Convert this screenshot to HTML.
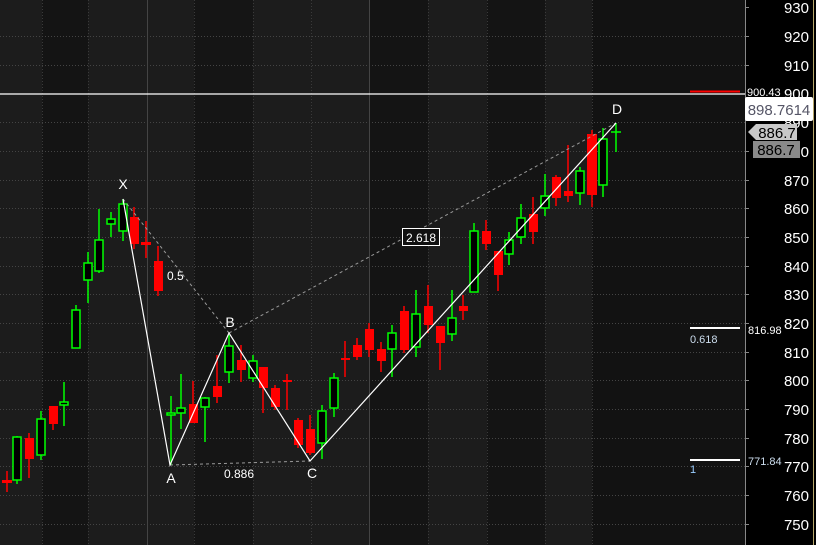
<!DOCTYPE html>
<html><head><meta charset="utf-8"><style>
html,body{margin:0;padding:0;background:#000;}
svg{display:block;}
text{font-family:"Liberation Sans",sans-serif;}
</style></head><body>
<svg width="816" height="545" xmlns="http://www.w3.org/2000/svg">
<rect width="816" height="545" fill="#000"/>
<!-- bands -->
<rect x="0" y="0" width="42" height="545" fill="#1c1c1c"/>
<rect x="42" y="0" width="46" height="545" fill="#141414"/>
<rect x="88" y="0" width="59" height="545" fill="#1c1c1c"/>
<rect x="147" y="0" width="47" height="545" fill="#1c1c1c"/>
<rect x="194" y="0" width="59" height="545" fill="#151515"/>
<rect x="253" y="0" width="58" height="545" fill="#1c1c1c"/>
<rect x="311" y="0" width="59" height="545" fill="#1c1c1c"/>
<rect x="370" y="0" width="58" height="545" fill="#141414"/>
<rect x="428" y="0" width="59" height="545" fill="#1c1c1c"/>
<rect x="487" y="0" width="58" height="545" fill="#141414"/>
<rect x="545" y="0" width="47" height="545" fill="#1c1c1c"/>
<rect x="592" y="0" width="153" height="545" fill="#121212"/>
<!-- vertical grid -->
<g stroke="#3a3a3a" stroke-width="1" stroke-dasharray="1,2">
<line x1="42.5" y1="0" x2="42.5" y2="545"/><line x1="88.5" y1="0" x2="88.5" y2="545"/>
<line x1="194.5" y1="0" x2="194.5" y2="545"/><line x1="253.5" y1="0" x2="253.5" y2="545"/>
<line x1="311.5" y1="0" x2="311.5" y2="545"/><line x1="428.5" y1="0" x2="428.5" y2="545"/>
<line x1="487.5" y1="0" x2="487.5" y2="545"/><line x1="545.5" y1="0" x2="545.5" y2="545"/>
<line x1="592.5" y1="0" x2="592.5" y2="545"/>
</g>
<g stroke="#444" stroke-width="1">
<line x1="147.5" y1="0" x2="147.5" y2="545"/><line x1="369.5" y1="0" x2="369.5" y2="545"/>
</g>
<!-- horizontal grid -->
<g stroke="#444" stroke-width="1" stroke-dasharray="1,2">
<line x1="0" y1="36.5" x2="745" y2="36.5"/><line x1="0" y1="65.5" x2="745" y2="65.5"/>
<line x1="0" y1="122.5" x2="745" y2="122.5"/><line x1="0" y1="151.5" x2="745" y2="151.5"/>
<line x1="0" y1="180.5" x2="745" y2="180.5"/><line x1="0" y1="208.5" x2="745" y2="208.5"/>
<line x1="0" y1="237.5" x2="745" y2="237.5"/><line x1="0" y1="266.5" x2="745" y2="266.5"/>
<line x1="0" y1="294.5" x2="745" y2="294.5"/><line x1="0" y1="323.5" x2="745" y2="323.5"/>
<line x1="0" y1="352.5" x2="745" y2="352.5"/><line x1="0" y1="380.5" x2="745" y2="380.5"/>
<line x1="0" y1="409.5" x2="745" y2="409.5"/><line x1="0" y1="438.5" x2="745" y2="438.5"/>
<line x1="0" y1="466.5" x2="745" y2="466.5"/><line x1="0" y1="495.5" x2="745" y2="495.5"/>
<line x1="0" y1="524.5" x2="745" y2="524.5"/>
</g>
<!-- wicks -->
<g stroke-width="1.5">
<g stroke="#ff0000">
<line x1="7" y1="471" x2="7" y2="492"/>
<line x1="29" y1="433" x2="29" y2="478"/>
<line x1="53" y1="406" x2="53" y2="430"/>
<line x1="134" y1="207" x2="134" y2="249"/>
<line x1="146" y1="221" x2="146" y2="258"/>
<line x1="158" y1="246" x2="158" y2="296"/>
<line x1="193" y1="381" x2="193" y2="423"/>
<line x1="217" y1="355" x2="217" y2="403"/>
<line x1="241" y1="345" x2="241" y2="382"/>
<line x1="263" y1="367" x2="263" y2="413"/>
<line x1="275" y1="385" x2="275" y2="410"/>
<line x1="287" y1="374" x2="287" y2="410"/>
<line x1="298" y1="418" x2="298" y2="448"/>
<line x1="310" y1="415" x2="310" y2="455"/>
<line x1="345" y1="341" x2="345" y2="377"/>
<line x1="357" y1="338" x2="357" y2="360"/>
<line x1="369" y1="323" x2="369" y2="357"/>
<line x1="381" y1="342" x2="381" y2="372"/>
<line x1="404" y1="306" x2="404" y2="353"/>
<line x1="428" y1="285" x2="428" y2="333"/>
<line x1="440" y1="326" x2="440" y2="370"/>
<line x1="463" y1="295" x2="463" y2="320"/>
<line x1="486" y1="220" x2="486" y2="250"/>
<line x1="498" y1="251" x2="498" y2="291"/>
<line x1="533" y1="197" x2="533" y2="244"/>
<line x1="556" y1="175" x2="556" y2="206"/>
<line x1="568" y1="145" x2="568" y2="202"/>
<line x1="592" y1="130" x2="592" y2="207"/>
</g>
<g stroke="#00ff00">
<line x1="17" y1="436" x2="17" y2="484"/>
<line x1="41" y1="411" x2="41" y2="460"/>
<line x1="64" y1="382" x2="64" y2="426"/>
<line x1="76" y1="305" x2="76" y2="348"/>
<line x1="88" y1="252" x2="88" y2="303"/>
<line x1="99" y1="209" x2="99" y2="273"/>
<line x1="111" y1="212" x2="111" y2="237"/>
<line x1="123" y1="199" x2="123" y2="241"/>
<line x1="171" y1="396" x2="171" y2="465"/>
<line x1="181" y1="374" x2="181" y2="429"/>
<line x1="205" y1="397" x2="205" y2="442"/>
<line x1="229" y1="335" x2="229" y2="383"/>
<line x1="253" y1="355" x2="253" y2="382"/>
<line x1="322" y1="405" x2="322" y2="459"/>
<line x1="334" y1="373" x2="334" y2="417"/>
<line x1="392" y1="325" x2="392" y2="377"/>
<line x1="416" y1="290" x2="416" y2="357"/>
<line x1="452" y1="290" x2="452" y2="341"/>
<line x1="474" y1="223" x2="474" y2="292"/>
<line x1="509" y1="232" x2="509" y2="265"/>
<line x1="521" y1="204" x2="521" y2="244"/>
<line x1="545" y1="174" x2="545" y2="216"/>
<line x1="580" y1="167" x2="580" y2="205"/>
<line x1="603" y1="128" x2="603" y2="197"/>
<line x1="616" y1="123" x2="616" y2="152"/>
<line x1="611" y1="132" x2="621" y2="132"/>
</g>
</g>
<!-- red bodies -->
<g fill="#ff0000">
<rect x="2" y="480" width="10" height="3"/>
<rect x="25" y="438" width="9" height="21"/>
<rect x="49" y="406" width="9" height="18"/>
<rect x="130" y="217" width="9" height="27"/>
<rect x="141" y="242" width="10" height="3"/>
<rect x="154" y="261" width="9" height="30"/>
<rect x="189" y="404" width="9" height="19"/>
<rect x="213" y="386" width="9" height="11"/>
<rect x="237" y="360" width="9" height="10"/>
<rect x="259" y="367" width="9" height="21"/>
<rect x="271" y="388" width="9" height="19"/>
<rect x="283" y="380" width="9" height="2"/>
<rect x="294" y="420" width="9" height="25"/>
<rect x="306" y="429" width="9" height="24"/>
<rect x="341" y="358" width="9" height="2"/>
<rect x="353" y="345" width="9" height="12"/>
<rect x="365" y="329" width="9" height="21"/>
<rect x="377" y="349" width="9" height="12"/>
<rect x="400" y="311" width="9" height="39"/>
<rect x="424" y="306" width="9" height="19"/>
<rect x="436" y="326" width="9" height="17"/>
<rect x="459" y="306" width="9" height="5"/>
<rect x="482" y="231" width="9" height="13"/>
<rect x="494" y="251" width="9" height="24"/>
<rect x="529" y="214" width="9" height="18"/>
<rect x="552" y="177" width="9" height="21"/>
<rect x="564" y="191" width="9" height="5"/>
<rect x="587" y="134" width="10" height="61"/>
</g>
<!-- green bodies -->
<g fill="#000" stroke="#00ff00" stroke-width="1.5">
<rect x="13" y="437" width="8" height="43"/>
<rect x="37" y="419" width="8" height="36"/>
<rect x="60" y="402" width="8" height="3"/>
<rect x="72" y="310" width="8" height="38"/>
<rect x="84" y="263" width="8" height="17"/>
<rect x="95" y="240" width="8" height="31"/>
<rect x="107" y="219" width="8" height="5"/>
<rect x="119" y="204" width="8" height="27"/>
<rect x="167" y="413" width="8" height="2"/>
<rect x="177" y="408" width="8" height="5"/>
<rect x="201" y="398" width="8" height="9"/>
<rect x="225" y="346" width="8" height="26"/>
<rect x="249" y="361" width="8" height="17"/>
<rect x="318" y="411" width="8" height="32"/>
<rect x="330" y="378" width="8" height="30"/>
<rect x="388" y="333" width="8" height="16"/>
<rect x="412" y="314" width="8" height="33"/>
<rect x="448" y="318" width="8" height="16"/>
<rect x="470" y="231" width="8" height="61"/>
<rect x="505" y="240" width="8" height="14"/>
<rect x="517" y="218" width="8" height="19"/>
<rect x="541" y="196" width="8" height="12"/>
<rect x="576" y="171" width="8" height="22"/>
<rect x="599" y="139" width="8" height="46"/>
</g>
<!-- pattern -->
<g fill="none" stroke="#9a9a9a" stroke-width="1" stroke-dasharray="3,3">
<line x1="123" y1="199" x2="229" y2="333"/>
<line x1="170" y1="465" x2="310" y2="461"/>
<line x1="229" y1="333" x2="616" y2="123"/>
</g>
<polyline points="123,199 170,465 229,333 310,461 616,123" fill="none" stroke="#fff" stroke-width="1.2"/>
<g fill="#fff" font-size="14" text-anchor="middle">
<text x="123" y="189">X</text>
<text x="171" y="483">A</text>
<text x="230" y="327">B</text>
<text x="312" y="478">C</text>
<text x="617" y="114">D</text>
</g>
<g fill="#fff" font-size="12">
<text x="167" y="280">0.5</text>
<text x="224" y="478">0.886</text>
</g>
<rect x="402.5" y="228.5" width="37" height="17" fill="#111" stroke="#fff" stroke-width="1"/>
<text x="421" y="242" fill="#fff" font-size="12" text-anchor="middle">2.618</text>
<!-- horizontal lines -->
<line x1="0" y1="94" x2="745" y2="94" stroke="#fff" stroke-width="1.3"/>
<line x1="690" y1="91.5" x2="740" y2="91.5" stroke="#ff0000" stroke-width="2"/>
<line x1="690" y1="328" x2="740" y2="328" stroke="#fff" stroke-width="2"/>
<line x1="690" y1="460" x2="740" y2="460" stroke="#fff" stroke-width="2"/>
<text x="690" y="343" fill="#cde" font-size="11">0.618</text>
<text x="690" y="473" fill="#9cf" font-size="11">1</text>
<!-- axis -->
<line x1="745.5" y1="0" x2="745.5" y2="545" stroke="#888"/>
<line x1="813.5" y1="0" x2="813.5" y2="545" stroke="#b9a86a"/>
<g stroke="#888">
<line x1="745" y1="7.5" x2="749" y2="7.5"/><line x1="745" y1="36.5" x2="749" y2="36.5"/>
<line x1="745" y1="65.5" x2="749" y2="65.5"/><line x1="745" y1="151.5" x2="749" y2="151.5"/>
<line x1="745" y1="180.5" x2="749" y2="180.5"/><line x1="745" y1="208.5" x2="749" y2="208.5"/>
<line x1="745" y1="237.5" x2="749" y2="237.5"/><line x1="745" y1="266.5" x2="749" y2="266.5"/>
<line x1="745" y1="294.5" x2="749" y2="294.5"/><line x1="745" y1="323.5" x2="749" y2="323.5"/>
<line x1="745" y1="352.5" x2="749" y2="352.5"/><line x1="745" y1="380.5" x2="749" y2="380.5"/>
<line x1="745" y1="409.5" x2="749" y2="409.5"/><line x1="745" y1="438.5" x2="749" y2="438.5"/>
<line x1="745" y1="466.5" x2="749" y2="466.5"/><line x1="745" y1="495.5" x2="749" y2="495.5"/>
<line x1="745" y1="524.5" x2="749" y2="524.5"/>
</g>
<g fill="#fff" font-size="15" text-anchor="end">
<text x="809" y="13">930</text><text x="809" y="42">920</text><text x="809" y="71">910</text>
<text x="809" y="99">900</text><text x="809" y="128">890</text><text x="809" y="157">880</text>
<text x="809" y="186">870</text><text x="809" y="214">860</text><text x="809" y="243">850</text>
<text x="809" y="272">840</text><text x="809" y="300">830</text><text x="809" y="329">820</text>
<text x="809" y="358">810</text><text x="809" y="386">800</text><text x="809" y="415">790</text>
<text x="809" y="444">780</text><text x="809" y="472">770</text><text x="809" y="501">760</text>
<text x="809" y="530">750</text>
</g>
<text x="747" y="96" fill="#fff" font-size="11">900.43</text>
<text x="748" y="334" fill="#fff" font-size="11">816.98</text>
<text x="748" y="465" fill="#cde" font-size="11">771.84</text>
<rect x="745" y="97" width="68" height="24" fill="#fff" rx="2"/>
<text x="779" y="115" fill="#556" font-size="15" text-anchor="middle">898.7614</text>
<polygon points="748,132 756,124 797,124 797,140 756,140" fill="#c8c8c8"/>
<text x="777" y="138" fill="#000" font-size="15" text-anchor="middle">886.7</text>
<rect x="753" y="141" width="47" height="17" fill="#8a8a8a"/>
<text x="776" y="155" fill="#000" font-size="15" text-anchor="middle">886.7</text>
</svg>
</body></html>
